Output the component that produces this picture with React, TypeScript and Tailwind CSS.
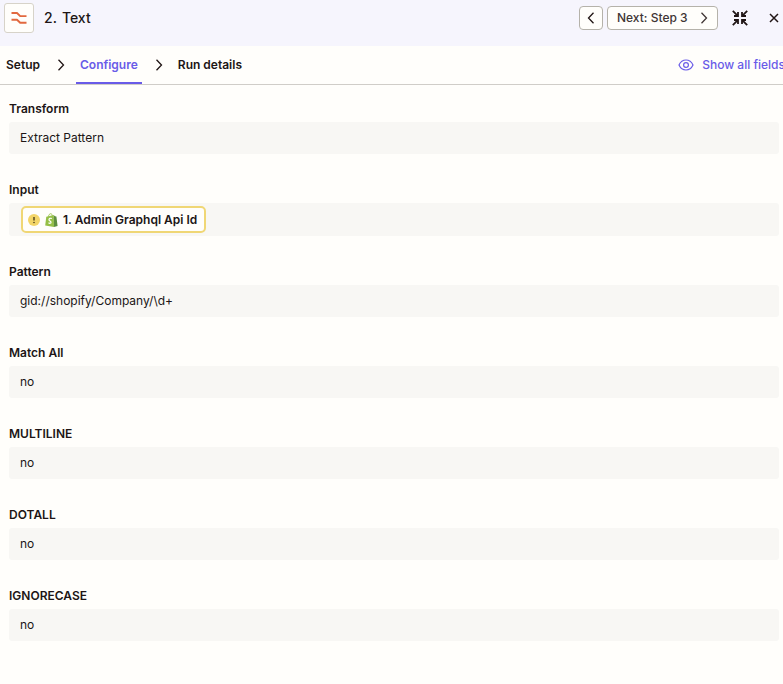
import { ReactNode } from "react";

const FIELDS = [
  { id: "transform", label: "Transform", value: "Extract Pattern" },
  { id: "input", label: "Input", token: "1. Admin Graphql Api Id" },
  { id: "pattern", label: "Pattern", value: "gid://shopify/Company/\\d+" },
  { id: "match-all", label: "Match All", value: "no" },
  { id: "multiline", label: "MULTILINE", value: "no" },
  { id: "dotall", label: "DOTALL", value: "no" },
  { id: "ignorecase", label: "IGNORECASE", value: "no" },
];

function Chevron({ left = false }: { left?: boolean }) {
  return (
    <svg viewBox="0 0 8 12" className="h-3 w-2 shrink-0" fill="none" stroke="currentColor" strokeWidth="1.3" aria-hidden="true">
      <path d={left ? "M6.500.8 1.500 6l5 5.200" : "M1.500.8 6.500 6l-5 5.200"} />
    </svg>
  );
}

function FormatterIcon() {
  return (
    <svg viewBox="0 0 16 14" className="h-[14px] w-4" fill="none" stroke="#e2683f" strokeWidth="1.900" aria-hidden="true">
      <path d="M.5 2H6l3.200 3.100h6.300" strokeLinejoin="round" />
      <path d="M.5 8.700H6l3.200 3.100h6.300" strokeLinejoin="round" />
    </svg>
  );
}

function CollapseIcon() {
  return (
    <svg viewBox="0 0 16 16" className="h-4 w-4" fill="none" stroke="currentColor" strokeWidth="1.8" aria-hidden="true">
      <path d="M.8.8l5 5M6 2v4H2" />
      <path d="M15.200.8l-5 5M10 2v4h4" />
      <path d="M.8 15.200l5-5M6 14v-4H2" />
      <path d="M15.200 15.200l-5-5M10 14v-4h4" />
    </svg>
  );
}

function CloseIcon() {
  return (
    <svg viewBox="0 0 10 10" className="h-[10px] w-[10px]" fill="none" stroke="currentColor" strokeWidth="1.5" aria-hidden="true">
      <path d="M1 1l8 8M9 1 1 9" />
    </svg>
  );
}

function EyeIcon() {
  return (
    <svg viewBox="0 0 16 12" className="h-3 w-4" fill="none" stroke="currentColor" strokeWidth="1.2" aria-hidden="true">
      <path d="M1 6C2.500 2.700 5 1 8 1s5.500 1.700 7 5c-1.500 3.300-4 5-7 5S2.500 9.300 1 6z" />
      <circle cx="8" cy="6" r="2.400" />
    </svg>
  );
}

function WarningIcon() {
  return (
    <svg viewBox="0 0 12 12" className="h-3 w-3" aria-hidden="true">
      <circle cx="6" cy="6" r="6" fill="#f3d568" />
      <path d="M6 3v3.600" stroke="#4a3f1c" strokeWidth="1.400" />
      <circle cx="6" cy="8.500" r=".8" fill="#4a3f1c" />
    </svg>
  );
}

function ShopifyIcon() {
  return (
    <svg viewBox="0 0 13 14" className="h-[14px] w-[13px]" aria-hidden="true">
      <path d="M1.300 3.800 8.800 2l.2 12-8.800-1.600z" fill="#95bf47" />
      <path d="M8.800 2.200 10 3.300l1.400.2L12.600 13 9 14z" fill="#5e8e3e" />
      <path d="M3.300 3.700C3.700 1.800 4.700.7 5.700.7c1 0 1.500 1 1.600 2.200" fill="none" stroke="#95bf47" strokeWidth=".9" />
      <path d="M6.900 5.500c-1.500-.6-2.900 0-2.900 1.200 0 1.400 2 1.400 2 2.700 0 1-1.400 1.200-2.500.4" fill="none" stroke="#fff" strokeWidth="1.200" />
    </svg>
  );
}

function Tab({ active = false, children }: { active?: boolean; children: ReactNode }) {
  return (
    <button
      type="button"
      aria-current={active ? "step" : undefined}
      className={
        active
          ? "h-full border-b-2 border-[#695be8] px-1 pt-[2px] text-[#695be8]"
          : "h-full"
      }
    >
      {children}
    </button>
  );
}

export default function App() {
  return (
    <main className="min-h-screen overflow-hidden bg-[#fffefb] font-['Inter',sans-serif] text-xs text-[#201515]">
      <header className="flex h-[46px] items-start justify-between bg-[#f6f5fd] pl-1 pr-1 pt-[3px]">
        <div className="flex items-center gap-[10px]">
          <span className="flex h-[30px] w-[30px] items-center justify-center rounded-[3px] border border-[#d7d3c9] bg-[#fffefb]">
            <FormatterIcon />
          </span>
          <h1 className="flex gap-[5px] text-sm font-medium">
            <span>2.</span>
            <span>Text</span>
          </h1>
        </div>
        <div className="flex h-[30px] items-center">
          <button
            type="button"
            aria-label="Previous step"
            className="flex h-6 w-6 items-center justify-center rounded-[4px] border border-[#b5b2aa] bg-[#fffefb]"
          >
            <Chevron left />
          </button>
          <button
            type="button"
            className="ml-1 flex h-6 w-[111px] items-center justify-between rounded-[4px] border border-[#b5b2aa] bg-[#fffefb] px-[9px] font-medium text-[#403535]"
          >
            Next: Step 3
            <Chevron />
          </button>
          <button type="button" aria-label="Collapse" className="ml-[14px]">
            <CollapseIcon />
          </button>
          <button type="button" aria-label="Close" className="ml-[21px]">
            <CloseIcon />
          </button>
        </div>
      </header>

      <nav className="flex h-[39px] items-center justify-between border-b border-[#d0cdc8] pl-[6px] font-semibold whitespace-nowrap">
        <div className="flex h-full items-center">
          <Tab>Setup</Tab>
          <span className="ml-[17px] mr-[11px]">
            <Chevron />
          </span>
          <Tab active>Configure</Tab>
          <span className="ml-[13px] mr-[15px]">
            <Chevron />
          </span>
          <Tab>Run details</Tab>
        </div>
        <button type="button" className="-mr-[2px] flex items-center gap-2 font-medium text-[#695be8]">
          <EyeIcon />
          Show all fields
        </button>
      </nav>

      <form className="flex flex-col gap-7 pb-10 pl-[9px] pr-1 pt-4">
        {FIELDS.map((field) => (
          <div key={field.id} className="flex flex-col gap-[5px]">
            {field.token ? (
              <>
                <span id={field.id} className="font-semibold">
                  {field.label}
                </span>
                <div
                  role="group"
                  aria-labelledby={field.id}
                  className="flex h-[33px] items-center rounded-[3px] bg-[#f8f7f4] px-3"
                >
                  <span className="flex h-[27px] items-center gap-[5px] rounded-[5px] border-2 border-[#f0d775] bg-[#fffefb] pl-[5px] pr-[7px] font-semibold">
                    <WarningIcon />
                    <ShopifyIcon />
                    {field.token}
                  </span>
                </div>
              </>
            ) : (
              <>
                <label htmlFor={field.id} className="font-semibold">
                  {field.label}
                </label>
                <input
                  id={field.id}
                  type="text"
                  readOnly
                  value={field.value}
                  className="h-8 w-full rounded-[3px] bg-[#f8f7f4] px-[11px] pb-[2px] outline-none"
                />
              </>
            )}
          </div>
        ))}
      </form>
    </main>
  );
}
